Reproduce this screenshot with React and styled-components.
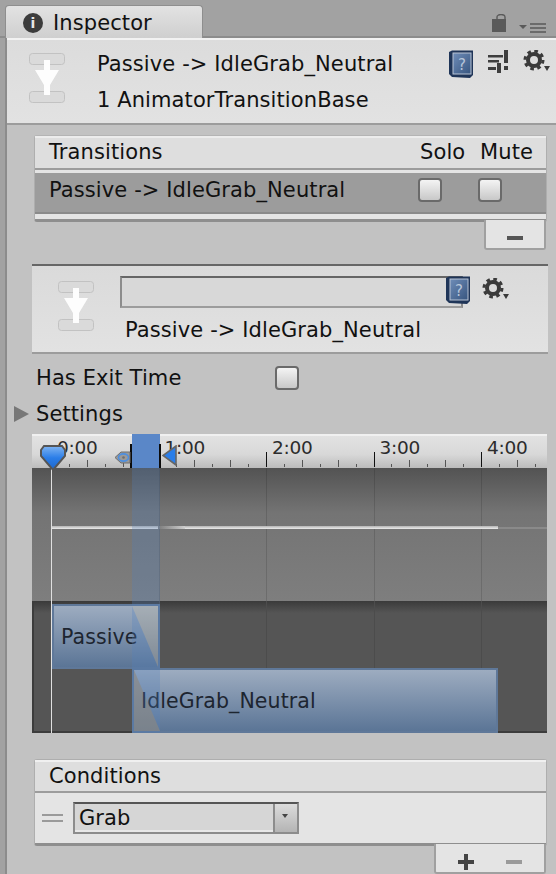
import styled, { createGlobalStyle } from 'styled-components';

const GlobalStyle = createGlobalStyle`
  html, body { margin: 0; padding: 0; background: #a2a2a2; }
  * { box-sizing: border-box; }
`;

const PX_PER_MIN = 107.5;
const ZERO_X = 19;
const RULER_W = 515;

function TransitionIcon() {
  return (
    <svg width="38" height="52" viewBox="0 0 38 52">
      <rect x="1.5" y="1.5" width="35" height="11" rx="3" fill="#dadada" stroke="#c2c2c2" />
      <rect x="1.5" y="39.5" width="35" height="11" rx="3" fill="#dadada" stroke="#c2c2c2" />
      <path d="M16 8 H22 V18 H31 L22 33 V43 H16 V33 L7 18 H16 Z" fill="#fdfdfd" />
    </svg>
  );
}

function HelpIcon() {
  return (
    <svg width="26" height="28" viewBox="0 0 26 28">
      <defs>
        <linearGradient id="helpFace" x1="0" y1="0" x2="1" y2="1">
          <stop offset="0" stopColor="#6f8db8" />
          <stop offset="1" stopColor="#37557f" />
        </linearGradient>
      </defs>
      <path d="M1 2 L4 0.5 H25 V25 L22 28 L4 27 L1 24 Z" fill="#1f3558" />
      <rect x="5" y="3" width="18" height="21" fill="url(#helpFace)" stroke="#b9c4d4" />
      <text x="14" y="20" fontFamily="'DejaVu Sans', sans-serif" fontSize="15" fill="#b8c6da" textAnchor="middle">?</text>
    </svg>
  );
}

function SlidersIcon() {
  return (
    <svg width="21" height="23" viewBox="0 0 21 23">
      <g fill="#3e3e3e">
        <rect x="0" y="5" width="15" height="2.5" />
        <rect x="0" y="10" width="11" height="2.5" />
        <rect x="16" y="0" width="4" height="13" />
        <rect x="0" y="17" width="8" height="3" />
        <rect x="9" y="13" width="4" height="10" />
        <rect x="16" y="16" width="4" height="4" />
      </g>
    </svg>
  );
}

function GearIcon() {
  return (
    <svg width="28" height="22" viewBox="0 0 28 22">
      <circle cx="11" cy="10" r="6" fill="none" stroke="#3a3a3a" strokeWidth="4" />
      <circle cx="11" cy="10" r="9" fill="none" stroke="#3a3a3a" strokeWidth="3" strokeDasharray="3.6 3.47" />
      <path d="M21 16 H27 L24 21 Z" fill="#3a3a3a" />
    </svg>
  );
}

function RulerTicks() {
  const ticks = [];
  const step = PX_PER_MIN / 6;
  for (let i = 0; ZERO_X + i * step < RULER_W; i++) {
    const x = Math.round(ZERO_X + i * step) + 0.5;
    const major = i % 6 === 0;
    const h = major ? 16 : i % 2 === 0 ? 8 : 4;
    ticks.push(<line key={i} x1={x} x2={x} y1={34 - h} y2={33} stroke={major ? '#111' : '#555'} />);
  }
  return (
    <TickSvg width={RULER_W} height="34">
      {ticks}
    </TickSvg>
  );
}

function PlayMarker() {
  return (
    <svg width="26" height="28" viewBox="0 0 26 28">
      <defs>
        <linearGradient id="marker" x1="0" y1="0" x2="0" y2="1">
          <stop offset="0" stopColor="#7fb4f2" />
          <stop offset="0.5" stopColor="#2a7de8" />
          <stop offset="1" stopColor="#1f66c8" />
        </linearGradient>
      </defs>
      <path d="M4 2 H22 L25 6 V12 L13 26 L1 12 V6 Z" fill="url(#marker)" stroke="#555" strokeWidth="2" />
    </svg>
  );
}

function EyeMarker() {
  return (
    <svg width="17" height="15" viewBox="0 0 17 15">
      <path d="M1 7.5 L7 2 H16 V13 H7 Z" fill="#9a9a9a" stroke="#6e6e6e" />
      <ellipse cx="9.5" cy="7.5" rx="5" ry="3.6" fill="none" stroke="#4d8fe0" strokeWidth="1.6" />
      <circle cx="9.5" cy="7.5" r="1.3" fill="#6f6f6f" />
    </svg>
  );
}

function ArrowMarker() {
  return (
    <svg width="15" height="21" viewBox="0 0 15 21">
      <path d="M14 1 V20 L1 10.5 Z" fill="#2a7de8" stroke="#666" strokeWidth="1.6" />
    </svg>
  );
}

export default function App() {
  return (
    <Page>
      <GlobalStyle />
      <TabStrip>
        <Tab>
          <InfoBadge>i</InfoBadge>
          Inspector
        </Tab>
        <StripTools>
          <svg width="15" height="19" viewBox="0 0 15 19">
            <path d="M5 6 V3 a4 2.5 0 0 1 8 0 V6" fill="none" stroke="#5a5a5a" strokeWidth="1.4" />
            <rect x="0" y="5" width="14" height="13" fill="#5a5a5a" />
          </svg>
          <svg width="28" height="10" viewBox="0 0 28 10">
            <path d="M0 2 H8 L4 6 Z" fill="#5a5a5a" />
            <path d="M11 1 H27 M11 5 H27 M11 9 H27" stroke="#5a5a5a" strokeWidth="1.6" />
          </svg>
        </StripTools>
      </TabStrip>

      <Panel>
        <Header>
          <TransitionIcon />
          <HeaderText>
            <span>Passive -&gt; IdleGrab_Neutral</span>
            <span>1 AnimatorTransitionBase</span>
          </HeaderText>
          <HeaderTools>
            <HelpIcon />
            <SlidersIcon />
            <GearIcon />
          </HeaderTools>
        </Header>

        <Content>
          <ListBox>
            <ListHead>
              <ListTitle>Transitions</ListTitle>
              <HeadCell>Solo</HeadCell>
              <HeadCell>Mute</HeadCell>
            </ListHead>
            <ListBody>
              <SelectedRow>
                <ListTitle>Passive -&gt; IdleGrab_Neutral</ListTitle>
                <CheckCell><Check /></CheckCell>
                <CheckCell><Check /></CheckCell>
              </SelectedRow>
            </ListBody>
          </ListBox>
          <FooterWrap>
            <ListFooter $width={62}>
              <Minus />
            </ListFooter>
          </FooterWrap>

          <SubHeader>
            <SubIcon><TransitionIcon /></SubIcon>
            <SubMain>
              <NameRow>
                <NameInput />
                <SubHelp><HelpIcon /></SubHelp>
                <SubGear><GearIcon /></SubGear>
              </NameRow>
              <SubTitle>Passive -&gt; IdleGrab_Neutral</SubTitle>
            </SubMain>
          </SubHeader>

          <FieldRow>
            <FieldLabel>Has Exit Time</FieldLabel>
            <Check />
          </FieldRow>
          <FoldRow>
            <FoldArrow />
            <span>Settings</span>
          </FoldRow>

          <Timeline>
            <Ruler>
              <RulerTicks />
              {[0, 1, 2, 3, 4].map((m) => (
                <RulerLabel key={m} style={{ left: ZERO_X + m * PX_PER_MIN + 6 }}>{m}:00</RulerLabel>
              ))}
            </Ruler>
            <UpperTrack>
              {[1, 2, 3, 4].map((m) => (
                <GridLine key={m} style={{ left: ZERO_X + m * PX_PER_MIN }} />
              ))}
              <CurveLine $left={19} $width={107} />
              <CurveFade />
              <CurveLine $left={153} $width={313} />
              <CurveTail />
            </UpperTrack>
            <LowerTrack>
              {[1, 2, 3, 4].map((m) => (
                <LowerGrid key={m} style={{ left: ZERO_X + m * PX_PER_MIN }} />
              ))}
              <SourceClip>
                <ClipLabel>Passive</ClipLabel>
                <SourceFade />
              </SourceClip>
              <TargetClip>
                <TargetFade />
                <ClipLabel>IdleGrab_Neutral</ClipLabel>
              </TargetClip>
            </LowerTrack>
            <ZeroLine />
            <BlendBand />
            <BandHead />
            <BandEdge $left={98} />
            <BandEdge $left={127} />
            <MarkerSlot $left={8} $top={10}><PlayMarker /></MarkerSlot>
            <MarkerSlot $left={82} $top={16}><EyeMarker /></MarkerSlot>
            <MarkerSlot $left={130} $top={11}><ArrowMarker /></MarkerSlot>
          </Timeline>

          <ConditionsBox>
            <ConditionsHead>Conditions</ConditionsHead>
            <ConditionRow>
              <DragHandle />
              <Dropdown>
                <DropdownValue>Grab</DropdownValue>
                <DropdownButton />
              </Dropdown>
            </ConditionRow>
          </ConditionsBox>
          <FooterWrap>
            <ListFooter $width={112}>
              <Plus />
              <Minus $muted />
            </ListFooter>
          </FooterWrap>
        </Content>
      </Panel>
    </Page>
  );
}

const Page = styled.div`
  width: 556px;
  height: 874px;
  overflow: hidden;
  background: #a2a2a2;
  font-family: "DejaVu Sans", sans-serif;
  font-size: 21px;
  letter-spacing: 0.1px;
  color: #111;
`;

const TabStrip = styled.div`
  height: 38px;
  padding: 5px 9px 0 5px;
  display: flex;
  justify-content: space-between;
  background: #a2a2a2;
  border-bottom: 2px solid #8c8c8c;
`;

const Tab = styled.div`
  width: 198px;
  height: 33px;
  padding: 1px 0 0 17px;
  display: flex;
  align-items: center;
  gap: 10px;
  background: linear-gradient(#e2e2e2, #cfcfcf);
  border: 1px solid #8e8e8e;
  border-bottom: none;
  border-radius: 4px 4px 0 0;
`;

const InfoBadge = styled.span`
  width: 20px;
  height: 20px;
  border-radius: 50%;
  background: #3c3c3c;
  color: #e6e6e6;
  font-size: 14px;
  font-weight: 700;
  line-height: 20px;
  text-align: center;
`;

const StripTools = styled.div`
  display: flex;
  align-items: flex-end;
  gap: 12px;
  padding-bottom: 3px;
`;

const Panel = styled.div`
  margin-left: 5px;
  height: 836px;
  background: #c2c2c2;
  border-left: 2px solid #8c8c8c;
`;

const Header = styled.div`
  height: 87px;
  padding: 12px 5px 0 21px;
  display: flex;
  background: linear-gradient(#dcdcdc, #e2e2e2);
  border-top: 2px solid #f2f2f2;
  border-bottom: 2px solid #9c9c9c;
`;

const HeaderText = styled.div`
  flex: 1;
  padding: 0 0 0 31px;
  display: flex;
  flex-direction: column;
  gap: 11px;
  line-height: 25px;
`;

const HeaderTools = styled.div`
  display: flex;
  align-items: flex-start;
  gap: 14px;
  margin-top: -2px;
`;

const Content = styled.div`
  padding-top: 10px;
`;

const ListBox = styled.div`
  margin: 0 9px 0 27px;
  border: 1px solid #aeaeae;
  border-top: 1px solid #b4b4b4;
  border-bottom: 3px solid #8e8e8e;
  border-radius: 3px;
  background: #e4e4e4;
`;

const ListHead = styled.div`
  height: 34px;
  padding: 0 8px 0 14px;
  display: flex;
  align-items: center;
  background: linear-gradient(#ececec 0 2px, #dedede 2px);
  border-bottom: 2px solid #9c9c9c;
`;

const ListTitle = styled.span`
  flex: 1;
`;

const HeadCell = styled.span`
  width: 60px;
  padding-left: 2px;
`;

const ListBody = styled.div`
  padding: 3px 0 5px;
`;

const SelectedRow = styled.div`
  height: 41px;
  padding: 0 8px 6px 14px;
  display: flex;
  align-items: center;
  background: #9c9c9c;
  border-bottom: 2px solid #8a8a8a;
`;

const CheckCell = styled.span`
  width: 60px;
  display: flex;
`;

const Check = styled.span`
  display: block;
  width: 24px;
  height: 24px;
  border: 2px solid #6a6a6a;
  border-radius: 4px;
  background: linear-gradient(#f4f4f4, #c8c8c8);
`;

const FooterWrap = styled.div`
  margin: -2px 10px 0 0;
  display: flex;
  justify-content: flex-end;
`;

const ListFooter = styled.div`
  width: ${(p) => p.$width}px;
  height: 30px;
  display: flex;
  align-items: center;
  justify-content: space-around;
  padding: 8px 6px 0;
  background: #e4e4e4;
  border: 2px solid #a0a0a0;
  border-top: none;
  border-radius: 0 0 3px 3px;
`;

const Minus = styled.span`
  width: 16px;
  height: 4px;
  background: ${(p) => (p.$muted ? '#9a9a9a' : '#555')};
`;

const Plus = styled.span`
  width: 16px;
  height: 16px;
  background:
    linear-gradient(#444, #444) center / 16px 4px no-repeat,
    linear-gradient(#444, #444) center / 4px 16px no-repeat;
`;

const SubHeader = styled.div`
  margin: 14px 8px 0 25px;
  height: 90px;
  display: flex;
  background: linear-gradient(#dadada, #e2e2e2);
  border-top: 2px solid #666;
  border-bottom: 2px solid #9c9c9c;
`;

const SubIcon = styled.div`
  width: 88px;
  padding: 14px 0 0 25px;
`;

const SubMain = styled.div`
  flex: 1;
  padding-top: 10px;
`;

const NameRow = styled.div`
  position: relative;
  width: 343px;
`;

const NameInput = styled.div`
  height: 32px;
  background: #d8d8d8;
  border: 2px solid #8c8c8c;
  border-top-color: #666;
  border-bottom-color: #9c9c9c;
`;

const SubHelp = styled.span`
  position: absolute;
  left: 325px;
  top: 0;
  line-height: 0;
`;

const SubGear = styled.span`
  position: absolute;
  left: 362px;
  top: 2px;
  line-height: 0;
`;

const SubTitle = styled.div`
  padding: 10px 0 0 5px;
  line-height: 24px;
`;

const FieldRow = styled.div`
  height: 34px;
  margin-top: 7px;
  padding-left: 29px;
  display: flex;
  align-items: center;
`;

const FieldLabel = styled.span`
  width: 239px;
`;

const FoldRow = styled.div`
  height: 34px;
  margin-top: 2px;
  padding-left: 7px;
  display: flex;
  align-items: center;
  gap: 7px;
`;

const FoldArrow = styled.span`
  width: 0;
  height: 0;
  border-left: 15px solid #777;
  border-top: 8px solid transparent;
  border-bottom: 8px solid transparent;
`;

const Timeline = styled.div`
  position: relative;
  margin: 3px 9px 0 25px;
  height: 299px;
  display: flex;
  flex-direction: column;
`;

const Ruler = styled.div`
  position: relative;
  height: 34px;
  background: linear-gradient(#f0f0f0 0 2px, #e2e2e2 2px, #d8d8d8 60%, #bcbcbc);
`;

const TickSvg = styled.svg`
  position: absolute;
  left: 0;
  top: 0;
`;

const RulerLabel = styled.span`
  position: absolute;
  top: 2px;
  font-size: 18.5px;
  letter-spacing: -0.3px;
  line-height: 24px;
  color: #2c2c2c;
`;

const UpperTrack = styled.div`
  position: relative;
  height: 133px;
  overflow: hidden;
  background: linear-gradient(#535353, #747474 34%, #7e7e7e);
`;

const GridLine = styled.span`
  position: absolute;
  top: 0;
  bottom: 0;
  width: 1px;
  background: rgba(0, 0, 0, 0.13);
`;

const CurveLine = styled.span`
  position: absolute;
  top: 58px;
  left: ${(p) => p.$left}px;
  width: ${(p) => p.$width}px;
  height: 3px;
  background: linear-gradient(#b4b4b4, #ececec);
`;

const CurveFade = styled.span`
  position: absolute;
  top: 58px;
  left: 126px;
  width: 28px;
  height: 3px;
  background: linear-gradient(90deg, #7c7c7c, #d0d0d0);
`;

const CurveTail = styled.span`
  position: absolute;
  top: 59px;
  left: 466px;
  right: 0;
  height: 2px;
  background: #8a8a8a;
`;

const LowerTrack = styled.div`
  position: relative;
  flex: 1;
  background: linear-gradient(#3a3a3a, #555 12px);
  border-left: 2px solid #3c3c3c;
  border-bottom: 2px solid #3c3c3c;
`;

const LowerGrid = styled.span`
  position: absolute;
  top: 0;
  bottom: 0;
  width: 1px;
  margin-left: -2px;
  background: #4c4c4c;
`;

const SourceClip = styled.div`
  position: absolute;
  left: 18px;
  top: 3px;
  width: 108px;
  height: 65px;
  padding: 1px 0 0 7px;
  display: flex;
  align-items: center;
  background: linear-gradient(#9dacc0, #5b7596);
  border: 2px solid #5f7899;
`;

const TargetClip = styled.div`
  position: absolute;
  left: 98px;
  top: 67px;
  width: 366px;
  height: 65px;
  padding: 1px 0 0 7px;
  display: flex;
  align-items: center;
  background: linear-gradient(#9dacc0, #5b7596);
  border: 2px solid #5f7899;
`;

const ClipLabel = styled.span`
  position: relative;
  font-size: 20.5px;
  color: #1d2530;
`;

const SourceFade = styled.span`
  position: absolute;
  top: 0;
  right: 0;
  bottom: 0;
  width: 26px;
  background: linear-gradient(#c6c0b3, #8e8b84);
  clip-path: polygon(0 0, 100% 0, 100% 100%);
`;

const TargetFade = styled.span`
  position: absolute;
  top: 0;
  left: 0;
  bottom: 0;
  width: 26px;
  background: linear-gradient(#9f9689, #898379);
  clip-path: polygon(0 0, 100% 100%, 0 100%);
`;

const ZeroLine = styled.span`
  position: absolute;
  left: 19px;
  top: 34px;
  bottom: 0;
  width: 1px;
  background: #e0e0e0;
`;

const BlendBand = styled.span`
  position: absolute;
  left: 100px;
  width: 28px;
  top: 34px;
  bottom: 0;
  background: rgba(84, 128, 190, 0.28);
`;

const BandHead = styled.span`
  position: absolute;
  left: 100px;
  top: 0;
  width: 28px;
  height: 34px;
  background: #5a87c8;
`;

const BandEdge = styled.span`
  position: absolute;
  left: ${(p) => p.$left}px;
  top: 10px;
  width: 2px;
  height: 24px;
  background: #0c0c0c;
`;

const MarkerSlot = styled.span`
  position: absolute;
  left: ${(p) => p.$left}px;
  top: ${(p) => p.$top}px;
  line-height: 0;
`;

const ConditionsBox = styled.div`
  margin: 26px 9px 0 27px;
  border: 1px solid #aeaeae;
  border-bottom: 3px solid #8e8e8e;
  border-radius: 3px;
  background: #e4e4e4;
`;

const ConditionsHead = styled.div`
  height: 33px;
  padding-left: 14px;
  line-height: 32px;
  background: linear-gradient(#f0f0f0 0 2px, #dedede 2px);
  border-bottom: 2px solid #9c9c9c;
`;

const ConditionRow = styled.div`
  height: 50px;
  padding-left: 7px;
  display: flex;
  align-items: center;
  gap: 10px;
`;

const DragHandle = styled.span`
  width: 21px;
  height: 8px;
  border-top: 2px solid #9a9a9a;
  border-bottom: 2px solid #9a9a9a;
`;

const Dropdown = styled.div`
  width: 226px;
  height: 32px;
  display: flex;
  border: 2px solid #8c8c8c;
  border-top-color: #555;
  background: #d6d6d6;
`;

const DropdownValue = styled.span`
  flex: 1;
  padding-left: 4px;
  line-height: 28px;
  border-bottom: 2px solid #e8e8e8;
`;

const DropdownButton = styled.span`
  position: relative;
  width: 24px;
  border-left: 2px solid #8c8c8c;
  background: linear-gradient(#dcdcdc, #b4b4b4);

  &::after {
    content: '';
    position: absolute;
    left: 7px;
    top: 10px;
    border-top: 4px solid #444;
    border-left: 3px solid transparent;
    border-right: 3px solid transparent;
  }
`;
